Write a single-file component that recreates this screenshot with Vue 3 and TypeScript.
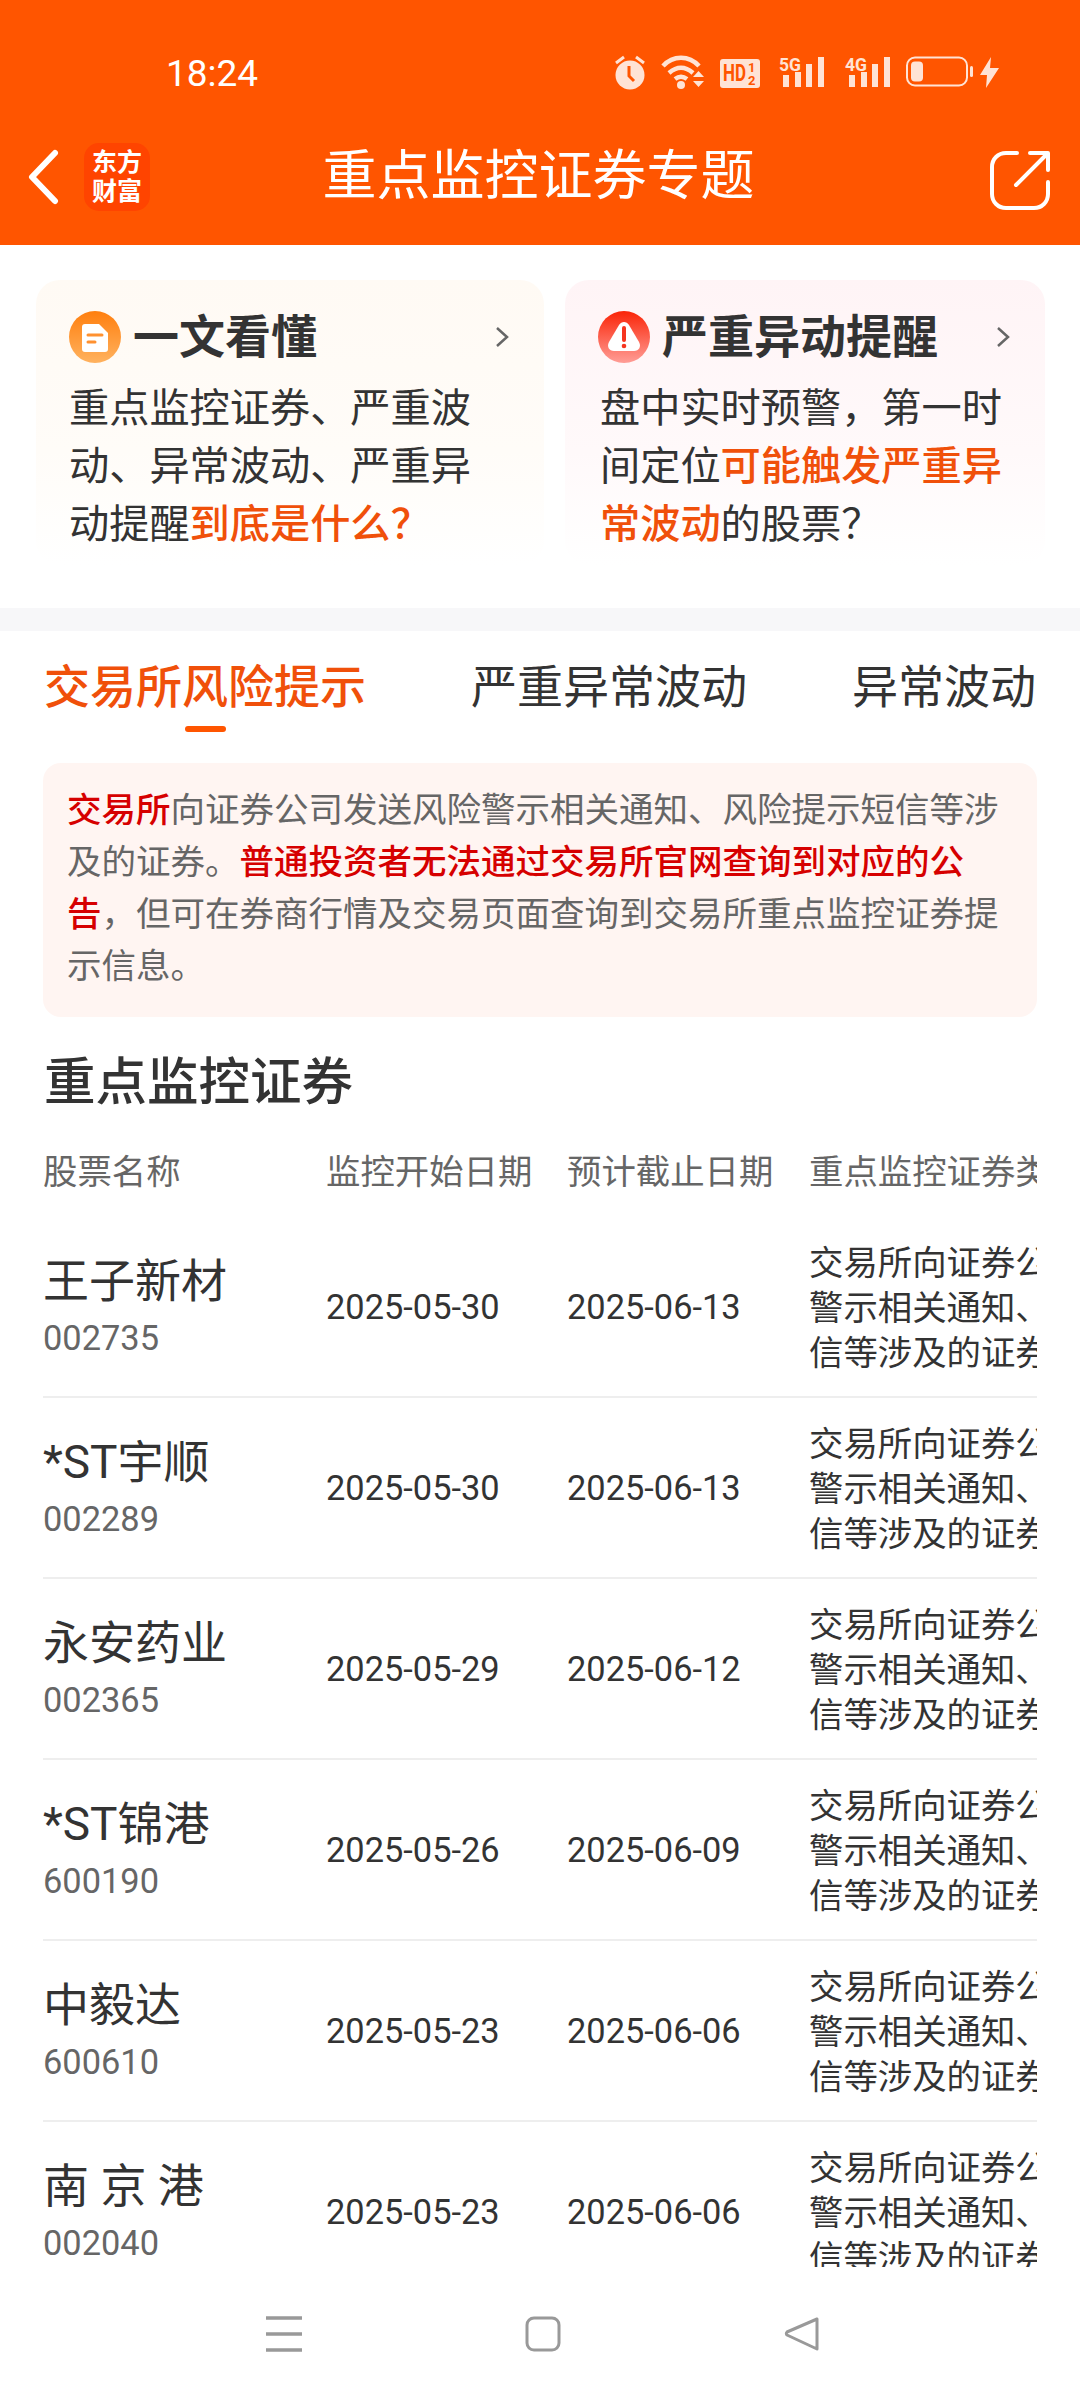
<template>
  <div class="page">
    <header class="top">
      <div class="status-bar">
        <span class="status-bar__time">18:24</span>
        <div class="status-bar__icons">
          <svg width="32" height="35" viewBox="0 0 32 35">
            <circle cx="16" cy="20" r="14.5" fill="#ffe3d5" />
            <path d="M15 11v10l5 5" fill="none" stroke="#ff5500" stroke-width="3" />
            <path d="M2 8l8-6M30 8l-8-6" stroke="#ffe3d5" stroke-width="3" />
          </svg>
          <svg class="wifi" width="46" height="36" viewBox="0 0 46 36">
            <path d="M2 12C12 1 28 1 38 12M8 19c8-7 16-7 24 0M14 25c4-3 8-3 12 0" fill="none" stroke="#ffe3d5" stroke-width="4.5" />
            <circle cx="20" cy="31" r="4" fill="#ffe3d5" />
            <path d="M32 23h11l-5.500-6zM32 27h11l-5.500 6z" fill="#ffe3d5" />
          </svg>
          <svg class="hd" width="40" height="29" viewBox="0 0 40 29">
            <rect width="40" height="29" rx="3" fill="#ffe3d5" />
            <text x="3" y="22" class="hd__big" textLength="23" lengthAdjust="spacingAndGlyphs">HD</text>
            <text x="28" y="13" class="hd__small">1</text>
            <text x="28" y="26" class="hd__small">2</text>
          </svg>
          <svg v-for="net in ['5G', '4G']" :key="net" class="net" width="46" height="32" viewBox="0 0 46 32">
            <text x="0" y="15" class="net__label" textLength="22" lengthAdjust="spacingAndGlyphs">{{ net }}</text>
            <rect x="4" y="19" width="6" height="12" fill="#ffe3d5" />
            <rect x="16" y="16" width="6" height="15" fill="#ffe3d5" />
            <rect x="27" y="8" width="6" height="23" fill="#ffe3d5" />
            <rect x="39" y="1" width="6" height="30" fill="#ffe3d5" />
          </svg>
          <svg class="battery" width="68" height="32" viewBox="0 0 68 32">
            <rect x="1" y="1.500" width="60" height="28" rx="8" fill="none" stroke="#ffe3d5" stroke-width="2" />
            <rect x="5" y="5.500" width="12" height="20" rx="4" fill="#ffe3d5" />
            <rect x="64" y="10" width="3" height="11" rx="1.500" fill="#ffe3d5" />
          </svg>
          <svg class="bolt" width="19" height="31" viewBox="0 0 19 31">
            <path d="M11 0L0 18h7l-1 13L19 11h-9z" fill="#ffe3d5" />
          </svg>
        </div>
      </div>

      <nav class="nav">
        <div class="nav__left">
          <svg width="32" height="56" viewBox="0 0 32 56">
            <path d="M28 4L5 28l23 24" fill="none" stroke="#fff" stroke-width="6" stroke-linecap="round" stroke-linejoin="round" />
          </svg>
          <div class="logo">东方<br />财富</div>
        </div>
        <h1 class="nav__title">重点监控证券专题</h1>
        <div class="nav__right">
          <svg width="60" height="60" viewBox="0 0 60 60">
            <path d="M27 3H16C8 3 2 9 2 17v27c0 8 6 14 14 14h28c8 0 14-6 14-14V32" fill="none" stroke="#fff" stroke-width="4" stroke-linecap="round" />
            <path d="M26 35L57 4M40 3h18v17" fill="none" stroke="#fff" stroke-width="4" stroke-linecap="round" stroke-linejoin="round" />
          </svg>
        </div>
      </nav>
    </header>

    <main class="content">
      <section class="cards">
        <div class="card card--orange">
          <div class="card__head">
            <svg width="52" height="52" viewBox="0 0 52 52">
              <defs>
                <linearGradient id="docBg" x1="0" y1="0" x2="0" y2="1">
                  <stop offset="0" stop-color="#ff7f0e" />
                  <stop offset="1" stop-color="#ffb25f" />
                </linearGradient>
              </defs>
              <circle cx="26" cy="26" r="26" fill="url(#docBg)" />
              <path d="M16 13h14l9 9v16a3 3 0 0 1-3 3H16a3 3 0 0 1-3-3V16a3 3 0 0 1 3-3z" fill="#fff" />
              <path d="M19 24h14M19 31h7" stroke="#ff9130" stroke-width="3" stroke-linecap="round" />
            </svg>
            <span class="card__title">一文看懂</span>
            <svg class="card__arrow" width="16" height="22" viewBox="0 0 16 22">
              <path d="M3 2l10 9-10 9" fill="none" stroke="#666" stroke-width="2.500" />
            </svg>
          </div>
          <p class="card__text">重点监控证券、严重波动、异常波动、严重异动提醒<b>到底是什么？</b></p>
        </div>
        <div class="card card--pink">
          <div class="card__head">
            <svg width="52" height="52" viewBox="0 0 52 52">
              <defs>
                <linearGradient id="warnBg" x1="0" y1="0" x2="0" y2="1">
                  <stop offset="0" stop-color="#fa2407" />
                  <stop offset="1" stop-color="#ff9d96" />
                </linearGradient>
              </defs>
              <circle cx="26" cy="26" r="26" fill="url(#warnBg)" />
              <path d="M21 14c2.500-4 7.500-4 10 0l10 17c2.500 4.500 0 9-5 9H16c-5 0-7.500-4.500-5-9z" fill="#fff" />
              <path d="M26 17v12" stroke="#f6351f" stroke-width="4" stroke-linecap="round" />
              <circle cx="26" cy="35" r="2.300" fill="#f6351f" />
            </svg>
            <span class="card__title">严重异动提醒</span>
            <svg class="card__arrow" width="16" height="22" viewBox="0 0 16 22">
              <path d="M3 2l10 9-10 9" fill="none" stroke="#666" stroke-width="2.500" />
            </svg>
          </div>
          <p class="card__text">盘中实时预警，第一时间定位<b>可能触发严重异常波动</b>的股票？</p>
        </div>
      </section>

      <div class="divider"></div>

      <div class="tabs">
        <div v-for="(tab, index) in tabs" :key="tab" class="tab" :class="{ 'tab--active': index === 0 }">
          <span>{{ tab }}</span>
          <i class="tab__bar"></i>
        </div>
      </div>

      <div class="notice">
        <b>交易所</b>向证券公司发送风险警示相关通知、风险提示短信等涉及的证券。<b>普通投资者无法通过交易所官网查询到对应的公告</b>，但可在券商行情及交易页面查询到交易所重点监控证券提示信息。
      </div>

      <h2 class="heading">重点监控证券</h2>

      <div class="table">
        <div class="table__row table__row--head">
          <div>股票名称</div>
          <div>监控开始日期</div>
          <div>预计截止日期</div>
          <div>重点监控证券类型</div>
        </div>
        <div v-for="stock in stocks" :key="stock.code" class="table__row">
          <div>
            <div class="stock__name">{{ stock.name }}</div>
            <div class="stock__code">{{ stock.code }}</div>
          </div>
          <div>{{ stock.start }}</div>
          <div>{{ stock.end }}</div>
          <div class="stock__desc">{{ desc }}</div>
        </div>
      </div>
    </main>

    <footer class="sys-nav">
      <svg width="36" height="36" viewBox="0 0 36 36">
        <path d="M0 2h36M0 18h36M0 34h36" stroke="#999" stroke-width="3.500" />
      </svg>
      <svg width="36" height="36" viewBox="0 0 36 36">
        <rect x="2" y="2" width="32" height="32" rx="7" fill="none" stroke="#999" stroke-width="3" />
      </svg>
      <svg width="36" height="36" viewBox="0 0 36 36">
        <path d="M33 3v30L3 19a2 2 0 0 1 0-3z" fill="none" stroke="#999" stroke-width="3" stroke-linejoin="round" />
      </svg>
    </footer>
  </div>
</template>

<script setup lang="ts">
interface Stock {
  name: string
  code: string
  start: string
  end: string
}

const tabs = ['交易所风险提示', '严重异常波动', '异常波动']

const desc = '交易所向证券公司发送风险警示相关通知、风险提示短信等涉及的证券。'

const stocks: Stock[] = [
  { name: '王子新材', code: '002735', start: '2025-05-30', end: '2025-06-13' },
  { name: '*ST宇顺', code: '002289', start: '2025-05-30', end: '2025-06-13' },
  { name: '永安药业', code: '002365', start: '2025-05-29', end: '2025-06-12' },
  { name: '*ST锦港', code: '600190', start: '2025-05-26', end: '2025-06-09' },
  { name: '中毅达', code: '600610', start: '2025-05-23', end: '2025-06-06' },
  { name: '南 京 港', code: '002040', start: '2025-05-23', end: '2025-06-06' },
]
</script>

<style>
html,
body {
  margin: 0;
  background: #fff;
}
</style>

<style scoped>
.page {
  width: 1080px;
  height: 2400px;
  display: flex;
  flex-direction: column;
  overflow: hidden;
  background: #fff;
  color: #333;
  font-family: Roboto, "Noto Sans CJK SC", sans-serif;
}

.top {
  height: 245px;
  background: #ff5500;
  color: #fff;
}

.status-bar {
  height: 100px;
  padding: 50px 81px 0 166px;
  box-sizing: border-box;
  display: flex;
  justify-content: space-between;
}

.status-bar__time {
  font-size: 37px;
  line-height: 48px;
}

.status-bar__icons {
  display: flex;
  align-items: flex-start;
  margin-top: 5px;
}

.status-bar__icons svg {
  flex: none;
  overflow: visible;
}

.wifi {
  margin: -1px 0 0 15px;
}

.hd {
  margin: 4px 0 0 13px;
}

.net {
  margin-top: 1px;
  margin-left: 20px;
}

.hd + .net {
  margin-left: 19px;
}

.battery {
  margin: 1px 0 0 15px;
}

.bolt {
  margin: 2px 0 0 6px;
}

.hd__big {
  font: bold 23px Roboto, sans-serif;
  fill: #ff5500;
}

.hd__small {
  font: bold 13px Roboto, sans-serif;
  fill: #ff5500;
}

.net__label {
  font: bold 19px Roboto, sans-serif;
  fill: #ffe3d5;
}

.nav {
  height: 145px;
  padding: 8px 30px 0 27px;
  box-sizing: border-box;
  display: grid;
  grid-template-columns: 1fr auto 1fr;
  align-items: center;
}

.nav__left {
  display: flex;
  align-items: center;
  gap: 25px;
}

.logo {
  width: 66px;
  height: 68px;
  border-radius: 15px;
  background: #ff4400;
  font-size: 25px;
  line-height: 29px;
  font-weight: 700;
  text-align: center;
  padding-top: 5px;
  box-sizing: border-box;
}

.nav__title {
  margin: 0;
  font-size: 54px;
  line-height: 70px;
  font-weight: 400;
}

.nav__right {
  display: flex;
  justify-content: flex-end;
  margin-top: 6px;
}

.content {
  flex: 1;
  min-height: 0;
  overflow: hidden;
}

.cards {
  height: 363px;
  padding: 35px 35px 0 36px;
  box-sizing: border-box;
  display: grid;
  grid-template-columns: 508px 480px;
  gap: 21px;
  align-items: start;
}

.card {
  height: 285px;
  border-radius: 24px;
  padding: 31px 34px 0 33px;
  box-sizing: border-box;
}

.card--orange {
  background: linear-gradient(#fffaf4, #fffcf8 60%, #fff);
}

.card--pink {
  padding-left: 35px;
  background: linear-gradient(#fff4f6, #fff9fa 60%, #fff);
}

.card__head {
  display: flex;
  align-items: center;
  gap: 12px;
  height: 52px;
}

.card--pink .card__head {
  margin-left: -2px;
}

.card__title {
  font-size: 46px;
  font-weight: 700;
  padding-bottom: 8px;
}

.card__arrow {
  margin-left: auto;
}

.card__text {
  margin: 17px 0 0;
  width: 412px;
  font-size: 40.200px;
  line-height: 58px;
}

.card__text b {
  color: #f0500a;
  font-weight: 500;
}

.divider {
  height: 23px;
  background: #f7f7f9;
}

.tabs {
  display: flex;
  gap: 105px;
  padding: 26px 0 0 44px;
  white-space: nowrap;
}

.tab {
  display: flex;
  flex-direction: column;
  align-items: center;
  font-size: 46px;
  line-height: 60px;
}

.tab__bar {
  width: 41px;
  height: 6px;
  margin-top: 9px;
  border-radius: 3px;
}

.tab--active {
  color: #f0500a;
  font-weight: 500;
}

.tab--active .tab__bar {
  background: #ff5500;
}

.notice {
  margin: 31px 43px 0 43px;
  padding: 21px 24px 25px;
  border-radius: 18px;
  background: #fff5f2;
  color: #666;
  font-size: 34.500px;
  line-height: 52px;
}

.notice b {
  color: #d60000;
  font-weight: 500;
}

.heading {
  margin: 31px 0 29px 44px;
  font-size: 51.500px;
  line-height: 70px;
  font-weight: 500;
}

.table {
  width: 994px;
  margin-left: 43px;
  overflow: hidden;
}

.table__row {
  width: 1176px;
  height: 181px;
  display: grid;
  grid-template-columns: 283px 241px 242px 420px;
  align-items: center;
  box-sizing: border-box;
  border-bottom: 2px solid #eee;
  font-size: 34.400px;
  white-space: nowrap;
}

.table__row--head {
  height: 50px;
  margin-bottom: 20px;
  border-bottom: 0;
  color: #666;
  line-height: 50px;
}

.stock__name {
  font-size: 46px;
  line-height: 60px;
}

.stock__code {
  margin-top: 2px;
  color: #666;
  line-height: 50px;
}

.stock__desc {
  padding-top: 3px;
  white-space: normal;
  line-height: 45px;
}

.sys-nav {
  height: 133px;
  flex: none;
  display: flex;
  gap: 223px;
  padding: 49px 0 0 266px;
  box-sizing: border-box;
  background: #fff;
}
</style>
